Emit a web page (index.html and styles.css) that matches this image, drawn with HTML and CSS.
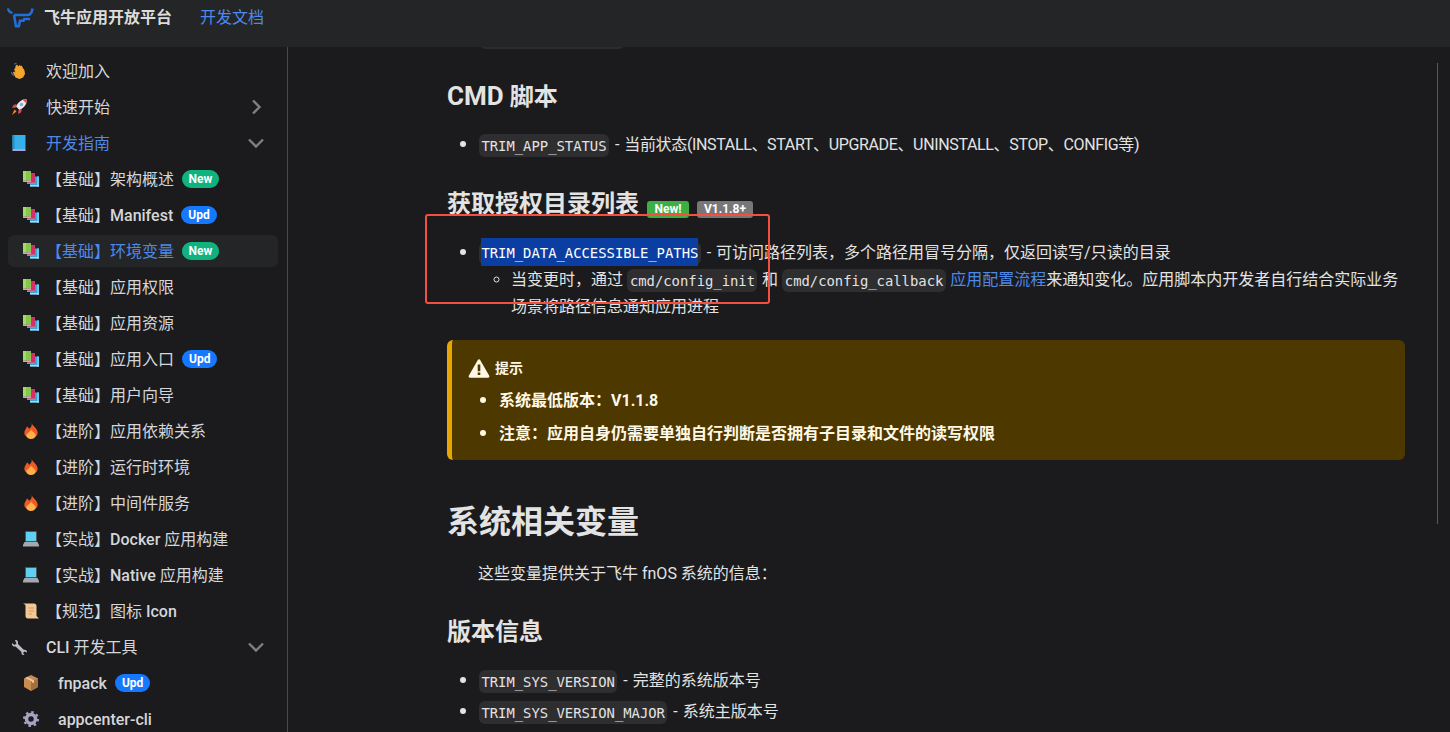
FILE: index.html
```html
<!DOCTYPE html>
<html lang="zh-CN">
<head>
<meta charset="utf-8">
<title>飞牛应用开放平台</title>
<link rel="stylesheet" href="styles.css">
</head>
<body>
<svg class="defs" width="0" height="0">
  <defs>
    <symbol id="books" viewBox="0 0 16 16">
      <rect x="7" y="5.500" width="9" height="10" fill="#35a6dd"/>
      <rect x="14" y="5.500" width="2" height="10" fill="#6ec6ee"/>
      <rect x="7" y="14" width="9" height="1.500" fill="#bcd4e2"/>
      <rect x="4" y="2" width="8" height="11" fill="#d62f63"/>
      <rect x="4" y="11.500" width="8" height="1.500" fill="#a58aa0"/>
      <rect x="0" y="0" width="8" height="9.500" fill="#86c64f"/>
      <rect x="0" y="0" width="3" height="9.500" fill="#a3d96c"/>
      <rect x="0" y="9.500" width="8" height="1.500" fill="#b9b9a8"/>
    </symbol>
    <symbol id="fire" viewBox="2 0 12 16" preserveAspectRatio="none">
      <path d="M8.500 0c.5 3 4.500 5 4.500 10a5 5 0 0 1-10 0c0-3 1.500-4.500 2-6.500 1 .5 1.300 1.500 1.500 2.500C7.500 5 9 3 8.500 0z" fill="#ef5a24"/>
      <path d="M8 6.500c.5 2 3.500 3.500 3.500 6a3.500 3.500 0 0 1-7 0C4.500 10.500 7.500 9 8 6.500z" fill="#ffb04d"/>
    </symbol>
    <symbol id="laptop" viewBox="0 0 16 16">
      <rect x="2" y="0" width="12" height="11" rx="1" fill="#4f565d"/>
      <rect x="3" y="1" width="10" height="9" fill="#5fd0ef"/>
      <path d="M1.500 11h13l1.500 3v1.500H0V14z" fill="#a3a9b0"/>
    </symbol>
  </defs>
</svg>

<header class="navbar">
  <svg class="logo" viewBox="7 7 28 22" aria-hidden="true">
    <g fill="none" stroke="#1f6fdc" stroke-width="2.600">
      <path d="M8 8.500c.3 2.500 1.800 4 4.500 4.500" stroke-width="2.200"/>
      <path d="M14 15H27.500C30.500 15 32 12.500 32.500 8.500"/>
      <path d="M14 15L16 26.200H18.800L20 20.800H23.500L24.300 19H30"/>
    </g>
  </svg>
  <span class="brand">飞牛应用开放平台</span>
  <a class="nav-link">开发文档</a>
</header>

<div class="layout">
  <aside class="sidebar">
    <ul class="menu">
      <li class="item top">
        <svg class="ico" viewBox="0 0 16 16">
          <path d="M6 1.500l1.500 2 1-1.500 1.200 1 .8-.5 3 5 .5 3.500-2 3.500-3.500 1.500-4-1.500L2 9.500l1-1 1.500 1L3 6l1.200-.5L4.500 3z" fill="#f5a52b"/>
          <path d="M.5 9A4 4 0 0 0 3 12.500M3.500 1.500A3 3 0 0 1 6 0" fill="none" stroke="#3f6fb5" stroke-width="1.200"/>
        </svg>
        <span class="lbl">欢迎加入</span>
      </li>
      <li class="item top">
        <svg class="ico" viewBox="0 0 16 16">
          <path d="M16 0C11 0 7.500 2.500 5 7.500L8.500 11c5-2.500 7.500-6 7.500-11z" fill="#ece6e8"/>
          <path d="M16 0c-1.500 0-3 .3-4.300.8l3.500 3.500C15.700 3 16 1.500 16 0z" fill="#dc4658"/>
          <circle cx="10.500" cy="5.500" r="1.700" fill="#6fb2e6"/>
          <path d="M5.500 5L2.500 6 1 9l4-.5zM11 10.500L10 13.500 7 15l.5-4z" fill="#dc4658"/>
          <path d="M3.500 10.500l2 2L1 16z" fill="#f08a24"/>
        </svg>
        <span class="lbl">快速开始</span>
        <svg class="chev" viewBox="0 0 16 16"><path d="M5 1.500l6.500 6.500L5 14.500"/></svg>
      </li>
      <li class="item top active-text">
        <svg class="ico" viewBox="0 0 16 16"><rect x="1.500" y="0" width="13" height="14" fill="#35b0ea"/><rect x="1.500" y="0" width="2" height="14" fill="#2a8fc4"/><rect x="1.500" y="14" width="13" height="2" fill="#a9a4d8"/></svg>
        <span class="lbl">开发指南</span>
        <svg class="chev" viewBox="0 0 16 16"><path d="M1 4.500l7 7 7-7"/></svg>
      </li>

      <li class="item sub"><svg class="ico"><use href="#books"/></svg><span class="lbl">【基础】架构概述</span><span class="tag new">New</span></li>
      <li class="item sub"><svg class="ico"><use href="#books"/></svg><span class="lbl">【基础】<b class="latin">Manifest</b></span><span class="tag upd">Upd</span></li>
      <li class="item sub current active-text"><svg class="ico"><use href="#books"/></svg><span class="lbl">【基础】环境变量</span><span class="tag new">New</span></li>
      <li class="item sub"><svg class="ico"><use href="#books"/></svg><span class="lbl">【基础】应用权限</span></li>
      <li class="item sub"><svg class="ico"><use href="#books"/></svg><span class="lbl">【基础】应用资源</span></li>
      <li class="item sub"><svg class="ico"><use href="#books"/></svg><span class="lbl">【基础】应用入口</span><span class="tag upd">Upd</span></li>
      <li class="item sub"><svg class="ico"><use href="#books"/></svg><span class="lbl">【基础】用户向导</span></li>
      <li class="item sub"><svg class="ico"><use href="#fire"/></svg><span class="lbl">【进阶】应用依赖关系</span></li>
      <li class="item sub"><svg class="ico"><use href="#fire"/></svg><span class="lbl">【进阶】运行时环境</span></li>
      <li class="item sub"><svg class="ico"><use href="#fire"/></svg><span class="lbl">【进阶】中间件服务</span></li>
      <li class="item sub"><svg class="ico"><use href="#laptop"/></svg><span class="lbl">【实战】<b class="latin">Docker</b> 应用构建</span></li>
      <li class="item sub"><svg class="ico"><use href="#laptop"/></svg><span class="lbl">【实战】<b class="latin">Native</b> 应用构建</span></li>
      <li class="item sub"><svg class="ico" viewBox="0 0 16 16"><path d="M0 .5h11c1.500 0 2.500 1 2.500 2.500v10l2.500 2.500H5c-1.500 0-2.500-1-2.500-2.500V3C2.500 1.500 1.500 1 0 .5z" fill="#f3c896"/><path d="M5.500 5h5.500M5.500 8h5.500M5.500 11h3.500" stroke="#d99a5b"/></svg><span class="lbl">【规范】图标 <b class="latin">Icon</b></span></li>

      <li class="item top">
        <svg class="ico" viewBox="0 0 16 16"><path d="M1 4l2.500 2 2-1.500L4 1.500C5.500.5 7 1.500 7 3.500v1.500L13 11c2-.5 3 .5 3 2.500l-2.500-1-1.500 1.500 1.500 2c-2 .5-3.500-1-3-3L4.500 7.500C2.500 8 .5 6.500 1 4z" fill="#b9bcc2"/></svg>
        <span class="lbl"><b class="latin">CLI</b> 开发工具</span>
        <svg class="chev" viewBox="0 0 16 16"><path d="M1 4.500l7 7 7-7"/></svg>
      </li>
      <li class="item tool"><svg class="ico" viewBox="0 0 16 16"><path d="M8 0l7 3.500v8.500L8 16l-7-4V3.500z" fill="#c98d52"/><path d="M8 7l7-3.500v8.500L8 16z" fill="#a56f3c"/><path d="M4 1.800l7 3.700v2.500l-2-.5v-1L2.300 3z" fill="#e8c9a0"/></svg><span class="lbl latin">fnpack</span><span class="tag upd">Upd</span></li>
      <li class="item tool"><svg class="ico" viewBox="0 0 16 16"><circle cx="8" cy="8" r="4.500" fill="none" stroke="#a9a2c2" stroke-width="3.500"/><circle cx="8" cy="8" r="7" fill="none" stroke="#a9a2c2" stroke-width="2" stroke-dasharray="2.500 3"/></svg><span class="lbl latin">appcenter-cli</span></li>
    </ul>
  </aside>

  <main class="content">
    <div class="doc">
      <div class="clipped-code"></div>

      <h3 class="h3 first"><span class="caps">CMD</span> 脚本</h3>
      <ul class="list">
        <li><code>TRIM_APP_STATUS</code> - <span class="enum">当前状态(INSTALL、START、UPGRADE、UNINSTALL、STOP、CONFIG等)</span></li>
      </ul>

      <h3 class="h3 second">获取授权目录列表 <span class="badge green">New!</span> <span class="badge grey">V1.1.8+</span></h3>
      <ul class="list">
        <li><code><span class="sel">TRIM_DATA_ACCESSIBLE_PATHS</span></code> - 可访问路径列表，多个路径用冒号分隔，仅返回读写/只读的目录
          <ul class="nested">
            <li>当变更时，通过 <code>cmd/config_init</code> 和 <code>cmd/config_callback</code> <a class="link">应用配置流程</a>来通知变化。应用脚本内开发者自行结合实际业务场景将路径信息通知应用进程</li>
          </ul>
        </li>
      </ul>

      <div class="admonition">
        <div class="adm-head">
          <svg class="warn" viewBox="0 0 16 16"><path fill-rule="evenodd" d="M8.900 1.500a1 1 0 0 0-1.800 0L.2 13.500A1 1 0 0 0 1.100 15h13.800a1 1 0 0 0 .9-1.500zM7 5h2v5H7zm0 6h2v2H7z" fill="#fff8e6"/></svg>
          <span>提示</span>
        </div>
        <ul class="adm-list">
          <li>系统最低版本：V1.1.8</li>
          <li>注意：应用自身仍需要单独自行判断是否拥有子目录和文件的读写权限</li>
        </ul>
      </div>

      <h2 class="h2">系统相关变量</h2>
      <p class="para">这些变量提供关于飞牛 fnOS 系统的信息：</p>

      <h3 class="h3 third">版本信息</h3>
      <ul class="list">
        <li><code>TRIM_SYS_VERSION</code> - 完整的系统版本号</li>
        <li><code>TRIM_SYS_VERSION_MAJOR</code> - 系统主版本号</li>
      </ul>
    </div>
    <div class="toc-line"></div>
  </main>
</div>

<div class="annotation"></div>
</body>
</html>
```

FILE: styles.css
```css
* { box-sizing: border-box; }
html, body { height: 100%; }
body {
  margin: 0;
  height: 732px;
  overflow: hidden;
  background: #1b1b1d;
  color: #e3e3e3;
  font-family: Roboto, "Noto Sans CJK SC", sans-serif;
  font-size: 16px;
  line-height: 27px;
  position: relative;
}
.defs { position: absolute; }
ul { margin: 0; padding: 0; }

.navbar {
  height: 47px;
  background: #242526;
  display: flex;
  align-items: flex-start;
  padding: 7px 0 0 7px;
  position: relative;
  z-index: 2;
}
.logo { width: 28px; height: 22px; margin-right: 9px; }
.brand { font-weight: 700; font-size: 16px; line-height: 22px; color: #dcdcdc; width: 156px; }
.nav-link { font-size: 16px; line-height: 22px; color: #4e89e8; }

.layout { display: flex; height: 685px; }

.sidebar {
  width: 288px;
  flex: none;
  border-right: 1px solid #444950;
  padding: 8px 9px 0 8px;
  overflow: hidden;
}
.menu { list-style: none; }
.item {
  height: 32px;
  margin-bottom: 4px;
  display: flex;
  align-items: center;
  font-size: 16px;
  color: #d4d6da;
  border-radius: 6px;
  line-height: 30px;
  white-space: nowrap;
}
.lbl { padding-top: 2px; }
.latin { font-weight: 500; }
.ico { width: 16px; height: 16px; flex: none; }
.top { padding-left: 3px; }
.top .lbl { margin-left: 19px; }
.sub { padding-left: 15px; }
.sub .lbl { margin-left: 7px; }
.tool { padding-left: 15px; }
.tool .lbl { margin-left: 19px; }
.active-text { color: #4e89e8; }
.current { background: #242526; }
.chev {
  width: 16px; height: 16px; margin-left: auto; margin-right: 14px;
  fill: none; stroke: #7d7f82; stroke-width: 2.4;
}
.tag {
  height: 18px;
  line-height: 18px;
  border-radius: 9px;
  padding: 0 7px;
  font-size: 12px;
  font-weight: 700;
  color: #fff;
  margin-left: 8px;
}
.tag.new { background: #10b37d; padding: 0 6.5px; }
.tag.upd { background: #1677ff; }

.content { flex: 1; position: relative; overflow: hidden; }
.doc { width: 958px; margin-left: 159px; position: relative; }
.clipped-code {
  position: absolute; left: 33px; top: -14px; width: 145px; height: 16px;
  background: #2c2c2e; border-radius: 6px;
}
.h3 { font-size: 24px; font-weight: 700; line-height: 30px; margin: 0; color: #e3e3e3; }
.h3.first { padding-top: 34px; margin-bottom: 18px; }
.caps { font-size: 26px; }
.h3.second { margin-top: 31px; margin-bottom: 19px; }
.h3.third { margin-top: 30px; margin-bottom: 19px; }
.h2 { font-size: 32px; font-weight: 700; line-height: 40px; margin: 42px 0 18px; }
.para { margin: 0; padding-left: 31px; }

.list { padding-left: 32px; }
.list > li { margin-bottom: 4px; word-spacing: 1px; }
.list > li + li { margin-top: -1px; }
.list > li::marker, .adm-list > li::marker { font-size: 20px; }
.enum { letter-spacing: -0.35px; }
.nested { padding-left: 32px; margin-top: 0; list-style: circle; word-spacing: 0.5px; }
code {
  font-family: "DejaVu Sans Mono", monospace;
  font-size: 13.87px;
  line-height: 1;
  background: #2e2e30;
  border-radius: 6px;
  padding: 3.5px 2.4px;
  margin-right: 1px;
  color: #e3e3e3;
  word-spacing: 0;
}
.nested code { margin-right: 0; }
.sel { background: #0a3ea3; padding: 7px 0 5px; color: #fff; }
.link { color: #4e89e8; }

.badge {
  display: inline-block;
  font-size: 12px;
  font-weight: 700;
  line-height: 17px;
  padding: 0 7.5px;
  border-radius: 3px;
  color: #fff;
  vertical-align: -1px;
  margin-left: 2px;
}
.green { background: #3cb043; }
.grey { background: #77777a; padding: 0 7px; margin-left: 2px; }

.admonition {
  background: #4d3800;
  border-left: 5px solid #e6a700;
  border-radius: 6px;
  height: 120px;
  margin-top: 20px;
  padding: 17px 0 0 16px;
  color: #fff8e6;
  font-weight: 700;
}
.adm-head { display: flex; align-items: center; font-size: 14px; line-height: 22px; }
.warn { width: 22px; height: 21px; margin-right: 5px; }
.adm-list { padding-left: 31px; margin-top: 5px; }
.adm-list li { font-size: 16px; line-height: 30.5px; }

.toc-line { position: absolute; left: 1149px; top: 16px; width: 1px; height: 461px; background: #55585c; }
.annotation {
  position: absolute; left: 425px; top: 214px; width: 345px; height: 90px;
  border: 2px solid #f4503f; border-radius: 3px; z-index: 3;
}
```
